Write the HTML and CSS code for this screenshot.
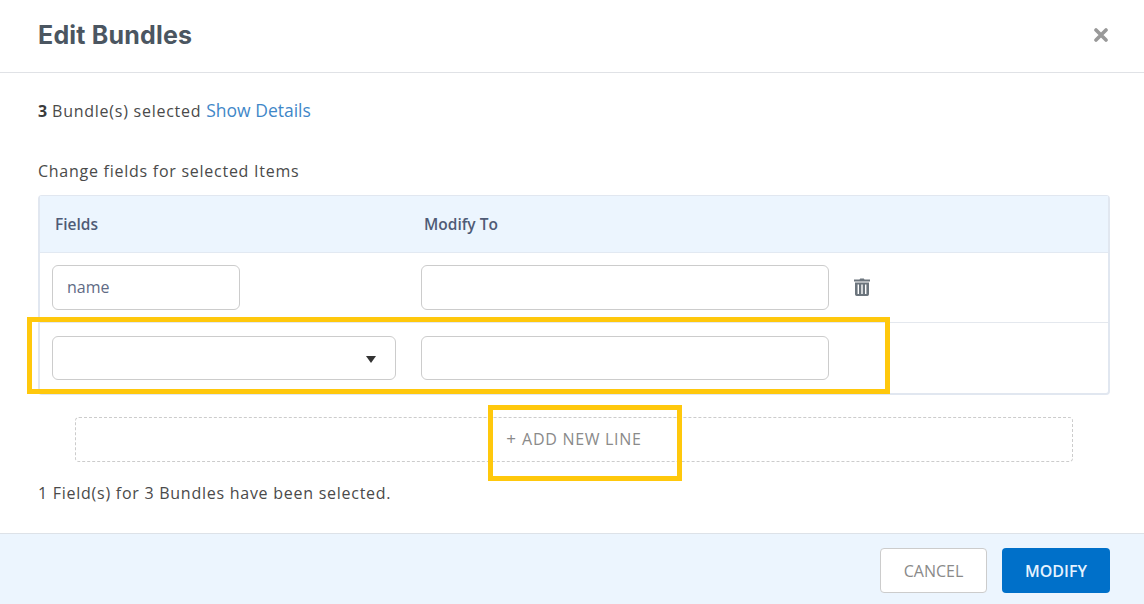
FILE: index.html
```html
<!DOCTYPE html>
<html lang="en">
<head>
<meta charset="utf-8">
<title>Edit Bundles</title>
<link rel="stylesheet" href="styles.css">
</head>
<body>
<div class="modal">
  <header class="modal-header">
    <h1 class="title">Edit Bundles</h1>
    <svg class="close" viewBox="0 0 14 14" width="14" height="14" aria-label="Close"><path d="M2 2 L12 12 M12 2 L2 12" stroke="#999" stroke-width="3.6" stroke-linecap="round" fill="none"/></svg>
  </header>
  <main class="modal-body">
    <p class="selected"><b>3</b> Bundle(s) selected <a class="link">Show Details</a></p>
    <p class="change">Change fields for selected Items</p>
    <div class="table">
      <div class="row head">
        <div class="cell-field">Fields</div>
        <div class="cell-modify">Modify To</div>
      </div>
      <div class="row first">
        <div class="cell-field"><div class="input short">name</div></div>
        <div class="cell-modify"><div class="input wide"></div></div>
        <svg class="trash" viewBox="0 0 16 18" width="16" height="18"><path d="M5.5 1.5 L6.2 .4 H9.8 L10.5 1.5 H16 V3.4 H0 V1.5 Z" fill="#6c757d"/><path fill-rule="evenodd" d="M1 4.5 H15 V16.3 A1.7 1.7 0 0 1 13.3 18 H2.7 A1.7 1.7 0 0 1 1 16.3 Z M3.6 6.6 V16 H5 V6.6 Z M7.3 6.6 V16 H8.7 V6.6 Z M11 6.6 V16 H12.4 V6.6 Z" fill="#6c757d"/></svg>
      </div>
      <div class="row second">
        <div class="cell-field"><div class="input select"><span class="caret"></span></div></div>
        <div class="cell-modify"><div class="input wide low"></div></div>
      </div>
    </div>
    <div class="add-line"><span class="plus">+</span><span>ADD NEW LINE</span></div>
    <p class="summary">1 Field(s) for 3 Bundles have been selected.</p>
  </main>
  <footer class="modal-footer">
    <button class="btn cancel">CANCEL</button>
    <button class="btn modify">MODIFY</button>
  </footer>
  <div class="mark mark-row"></div>
  <div class="mark mark-add"></div>
</div>
</body>
</html>
```
FILE: styles.css
```css
* { box-sizing: border-box; }
html, body { margin: 0; height: 100%; background: #fff; }
body { font-family: "Open Sans", "Liberation Sans", sans-serif; color: #444; overflow: hidden; }
.modal { position: relative; width: 1144px; height: 604px; display: flex; flex-direction: column; }
.modal-header { height: 73px; flex: none; border-bottom: 1px solid #e0e2e6; display: flex; align-items: center; justify-content: space-between; padding: 0 36px 2px 38px; }
.title { margin: 0; font-family: Inter, "Open Sans", sans-serif; font-size: 25px; font-weight: 700; color: #4b5661; letter-spacing: .2px; }
.close { display: block; margin-top: 0; }
.modal-body { flex: 1; padding: 0 34px 0 38px; }
.selected { margin: 26px 0 0; height: 24px; line-height: 24px; font-size: 16px; letter-spacing: .75px; color: #4a4a4a; }
.selected b { font-weight: 700; color: #3c3c3c; letter-spacing: 0; }
.link { font-size: 17.5px; line-height: 1; color: #3f87c8; letter-spacing: 0; }
.change { margin: 36px 0 0; height: 24px; line-height: 24px; font-size: 16px; letter-spacing: .74px; color: #4a4a4a; }
.table { width: 1072px; margin-top: 12px; border: 2px solid #e1e7f0; border-radius: 4px; border-top-width: 1px; }
.row { display: flex; align-items: center; position: relative; }
.head { height: 57px; background: #ecf5fe; border-bottom: 1px solid #e2e9f2; font-size: 15.5px; font-weight: 600; color: #4f5b76; }
.head .cell-modify { padding-left: 3px; }
.first { height: 70px; border-bottom: 1px solid #e4e8ee; }
.second { height: 70px; }
.cell-field { width: 381px; padding-left: 12px; flex: none; }
.head .cell-field { padding-left: 15px; }
.cell-modify { flex: none; }
.input { height: 45px; border: 1px solid #ccc; border-radius: 6px; background: #fff; font-size: 16px; line-height: 43px; color: #5f6b85; }
.short { width: 188px; padding-left: 14px; }
.wide { width: 408px; }
.low { height: 44px; }
.select { width: 344px; height: 44px; position: relative; }
.caret { position: absolute; right: 19px; top: 19px; width: 0; height: 0; border-left: 5.5px solid transparent; border-right: 5.5px solid transparent; border-top: 7px solid #333; }
.trash { margin-left: 25px; margin-bottom: 2px; flex: none; }
.add-line { width: 998px; height: 45px; margin: 22px 0 0 37px; border: 1px dashed #ccc; border-radius: 4px; display: flex; align-items: center; justify-content: center; gap: 6px; font-size: 16px; letter-spacing: .7px; color: #8a8a8a; padding-bottom: 2px; }
.plus { display: block; font-size: 17px; letter-spacing: 0; }
.summary { margin: 19px 0 0; height: 24px; line-height: 24px; font-size: 16px; letter-spacing: .74px; color: #4a4a4a; }
.modal-footer { height: 71px; flex: none; background: #ecf5fe; border-top: 1px solid #dde2e8; display: flex; align-items: flex-start; justify-content: flex-end; gap: 15px; padding: 14px 34px 0 0; }
.btn { height: 45px; border-radius: 4px; font-family: "Open Sans", sans-serif; font-size: 16px; padding: 0; }
.cancel { width: 107px; background: #fff; border: 1px solid #ccc; color: #8a8a8a; }
.modify { width: 108px; background: #0070c9; border: 0; color: #e6f3ff; font-weight: 600; }
.mark { position: absolute; border: 5px solid #ffc80c; pointer-events: none; }
.mark-row { left: 27px; top: 317px; width: 863px; height: 77px; }
.mark-add { left: 488px; top: 405px; width: 194px; height: 76px; }
```
